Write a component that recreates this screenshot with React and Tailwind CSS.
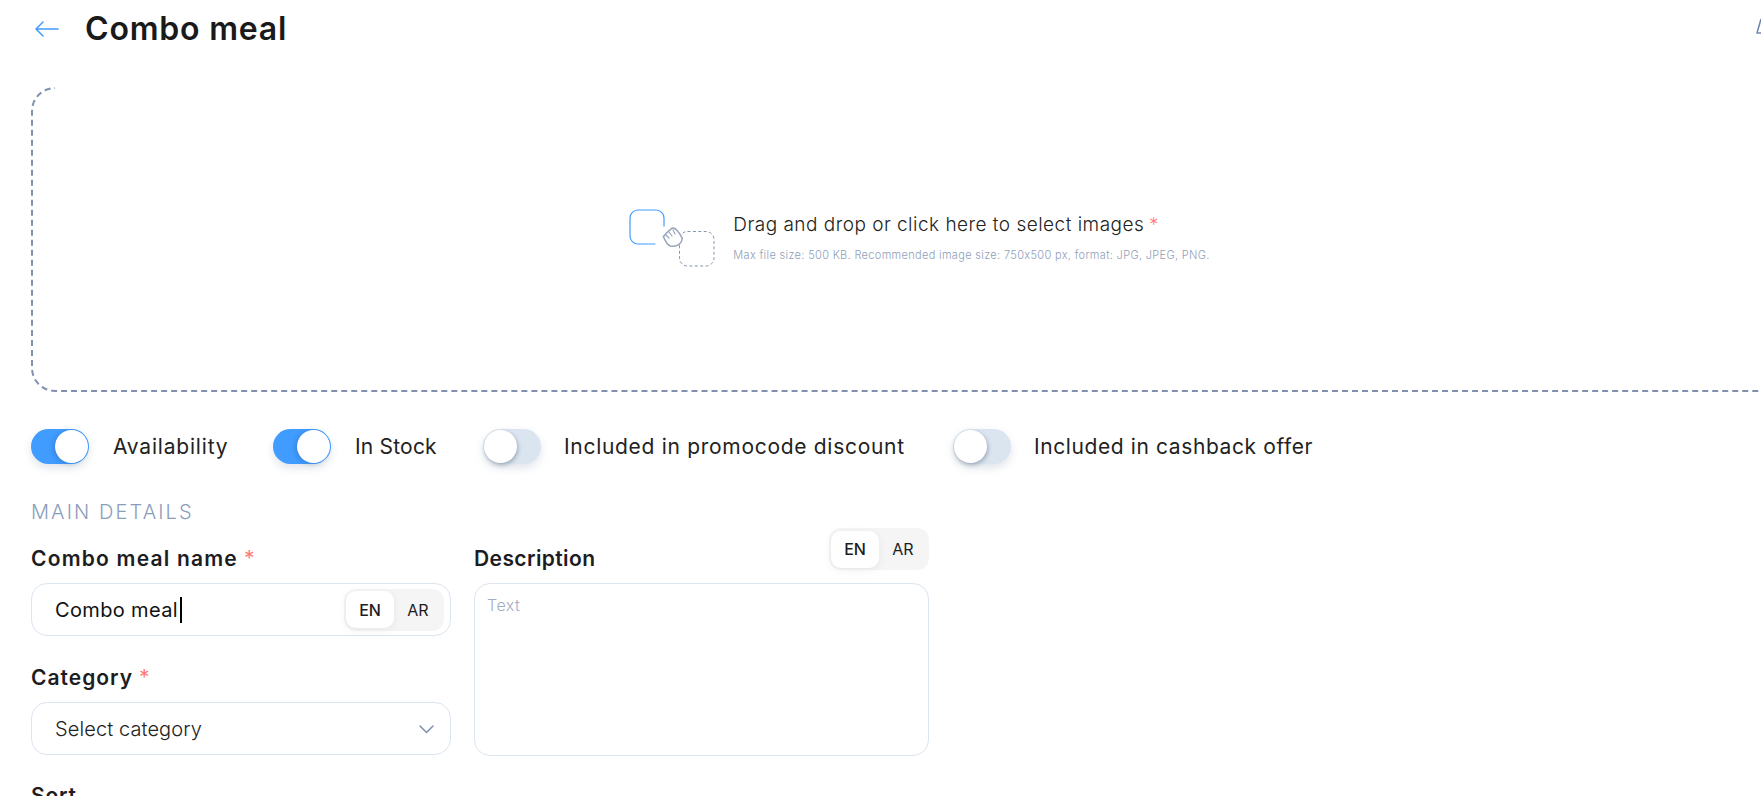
const font = { fontFamily: 'Inter, sans-serif' };

function Toggle({ on }) {
  return (
    <span
      className={`flex h-[35px] w-[58px] shrink-0 items-center rounded-full shadow-[0_4px_8px_rgba(100,120,150,0.2)] ${
        on ? 'justify-end bg-[#409cff] pr-px' : 'justify-start bg-[#dbe5f0] pl-px'
      }`}
    >
      <span className={`h-[33px] w-[33px] rounded-full bg-white ${on ? 'shadow-[-2px_1px_4px_rgba(30,70,130,0.25)]' : 'shadow-[1px_2px_4px_rgba(60,80,110,0.4)]'}`} />
    </span>
  );
}

function LangSwitch() {
  return (
    <div className="flex h-[42px] w-[100px] items-center rounded-[12px] bg-[#f5f5f6] pl-[2px] text-[16px] font-medium text-[#1d1d1f]">
      <span className="flex h-[37px] w-[48px] items-center justify-center rounded-[10px] bg-white shadow-[0_2px_8px_rgba(60,70,90,0.08)]">EN</span>
      <span className="flex h-[37px] w-[48px] items-center justify-center font-normal">AR</span>
    </div>
  );
}

function Label({ children, required, className }) {
  return (
    <div className={`text-[21px] font-semibold leading-[28px] text-[#1d1d1f] ${className}`}>
      {children}
      {required && <span className="ml-[6px] font-normal tracking-normal text-[#ff7a7a]">*</span>}
    </div>
  );
}

function DropIcon() {
  return (
    <svg width="90" height="60" viewBox="0 0 90 60" fill="none" className="mb-[3px] shrink-0">
      <path d="M36 18V10a8 8 0 0 0-8-8H10a8 8 0 0 0-8 8v18a8 8 0 0 0 8 8h17" stroke="#409cff" strokeWidth="1.2" strokeLinecap="round" />
      <rect x="51.5" y="23.5" width="34.5" height="34.5" rx="8" stroke="#8595b0" strokeWidth="1" strokeDasharray="3 2.4" />
      <path d="M35.3 28.7Q39 24 43.7 20.3Q46.5 19.5 48.7 22Q52 25.5 54.3 30.3Q54 34.5 50.3 37Q46 38.8 42 38Q38.5 36 37 32Z" fill="white" stroke="#9aa7bd" strokeWidth="1.6" strokeLinejoin="round" />
      <path d="M38 27l3 3M41 24l3 4M45 22l2 4" stroke="#9aa7bd" strokeWidth="1.2" strokeLinecap="round" />
    </svg>
  );
}

export default function App() {
  return (
    <div className="relative h-[796px] w-[1761px] overflow-hidden bg-white px-[31px] text-[#1d1d1f]" style={font}>
      <header className="flex h-[58px] w-[1750px] items-center justify-between">
        <div className="flex items-center">
          <svg width="24" height="16" viewBox="0 0 24 16" fill="none" className="ml-[4px]">
            <path d="M8 1L1 8l7 7M1 8h22" stroke="#409cff" strokeWidth="1.5" strokeLinecap="round" strokeLinejoin="round" />
          </svg>
          <h1 className="ml-[26px] text-[32px] font-semibold tracking-[0.8px] text-[#1a1a1a]">Combo meal</h1>
        </div>
        <svg width="24" height="24" viewBox="0 0 24 24" fill="none" className="mb-[-2px] mr-[1px]">
          <path d="M5 1L1 15h8" stroke="#6f86ad" strokeWidth="1.5" strokeLinejoin="round" />
        </svg>
      </header>

      {/* Upload area */}
      <div className="relative mt-[29px] flex h-[305px] w-[1776px] items-center justify-center rounded-[24px] border-2 border-dashed border-[#8090ae]">
        <div className="absolute -top-[2px] left-[22px] h-[3px] w-[1760px] bg-white" />
        <div className="flex items-center gap-[15px]">
          <DropIcon />
          <div className="pb-[5px]">
            <div className="text-[19px] font-light leading-[28px] tracking-[0.48px] text-[#222]">
              Drag and drop or click here to select images <span className="-ml-[1px] text-[#ff7a7a]">*</span>
            </div>
            <div className="mt-[8px] text-[11px] font-light leading-[16px] tracking-[0.33px] text-[#8fa0ba]">
              Max file size: 500 KB. Recommended image size: 750x500 px, format: JPG, JPEG, PNG.
            </div>
          </div>
        </div>
      </div>

      {/* Toggles */}
      <div className="mt-[37px] flex items-center text-[21px] font-normal text-[#222]">
        <Toggle on />
        <span className="ml-[24px] w-[160px] tracking-[0.8px]">Availability</span>
        <Toggle on />
        <span className="ml-[24px] w-[128px] tracking-[0.2px]">In Stock</span>
        <Toggle />
        <span className="ml-[23px] w-[389px] tracking-[0.7px]">Included in promocode discount</span>
        <Toggle />
        <span className="ml-[23px] tracking-[0.6px]">Included in cashback offer</span>
      </div>

      <div className="mt-[34px] text-[20px] font-light uppercase leading-[28px] tracking-[2.1px] text-[#8a9dbb]">Main details</div>

      <div className="mt-[2px] grid grid-cols-[420px_455px] gap-x-[23px]">
        <div>
          <Label required className="mt-[17px] tracking-[1.2px]">Combo meal name</Label>
          <div className="mt-[10px] flex h-[53px] items-center justify-between rounded-[16px] border border-[#dbe5f1] pl-[23px] pr-[6px]">
            <span className="flex items-center text-[20px] tracking-[0.35px] text-[#111]">
              Combo meal<span className="ml-[2px] h-[26px] w-[2px] bg-black" />
            </span>
            <LangSwitch />
          </div>
          <Label required className="mt-[28px] tracking-[1px]">Category</Label>
          <div className="mt-[10px] flex h-[53px] items-center justify-between rounded-[16px] border border-[#dbe5f1] pl-[23px] pr-[13px]">
            <span className="text-[20px] font-light tracking-[0.1px] text-[#222]">Select category</span>
            <svg width="22" height="22" viewBox="0 0 22 22" fill="none">
              <path d="M5 8l6.5 6.5L18 8" stroke="#7f90ad" strokeWidth="1.5" strokeLinecap="round" strokeLinejoin="round" />
            </svg>
          </div>
          <Label className="mt-[27px] tracking-[0.8px]">Sort</Label>
        </div>

        <div>
          <div className="flex h-[44px] items-start justify-between">
            <Label className="mt-[17px] tracking-[0.4px]">Description</Label>
            <LangSwitch />
          </div>
          <div className="mt-[11px] h-[173px] rounded-[16px] border border-[#dbe5f1] px-[12px] py-[9px] text-[16px] font-light tracking-[0.5px] text-[#a0aec4]">Text</div>
        </div>
      </div>
    </div>
  );
}
